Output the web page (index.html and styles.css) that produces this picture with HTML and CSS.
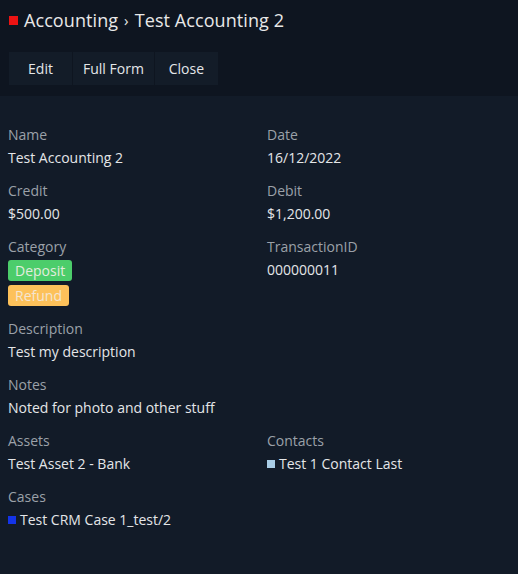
FILE: index.html
```html
<!DOCTYPE html>
<html lang="en">
<head>
  <meta charset="UTF-8" />
  <title>Accounting - Test Accounting 2</title>
  <link rel="stylesheet" href="styles.css">
</head>
<body>
  <div class="header">
    <h1 class="title">
      <span class="swatch swatch-red"></span>
      Accounting <span class="sep">›</span> Test Accounting 2
    </h1>
    <div class="toolbar">
      <button>Edit</button>
      <button>Full Form</button>
      <button>Close</button>
    </div>
  </div>

  <div class="details">
    <div class="field">
      <div class="label">Name</div>
      <div class="value">Test Accounting 2</div>
    </div>
    <div class="field">
      <div class="label">Date</div>
      <div class="value">16/12/2022</div>
    </div>

    <div class="field">
      <div class="label">Credit</div>
      <div class="value">$500.00</div>
    </div>
    <div class="field">
      <div class="label">Debit</div>
      <div class="value">$1,200.00</div>
    </div>

    <div class="field">
      <div class="label">Category</div>
      <div class="badges">
        <span class="badge badge-green">Deposit</span>
        <span class="badge badge-orange">Refund</span>
      </div>
    </div>
    <div class="field">
      <div class="label">TransactionID</div>
      <div class="value">000000011</div>
    </div>

    <div class="field wide">
      <div class="label">Description</div>
      <div class="value">Test my description</div>
    </div>

    <div class="field wide">
      <div class="label">Notes</div>
      <div class="value">Noted for photo and other stuff</div>
    </div>

    <div class="field">
      <div class="label">Assets</div>
      <div class="value">Test Asset 2 - Bank</div>
    </div>
    <div class="field">
      <div class="label">Contacts</div>
      <div class="value"><span class="swatch swatch-light"></span>Test 1 Contact Last</div>
    </div>

    <div class="field wide">
      <div class="label">Cases</div>
      <div class="value"><span class="swatch swatch-blue"></span>Test CRM Case 1_test/2</div>
    </div>
  </div>
</body>
</html>
```

FILE: styles.css
```css
body {
  font-family: 'Open Sans', sans-serif;
  background: #121b28;
  color: #e4e6e8;
  margin: 0;
  font-size: 14px;
  min-height: 574px;
}

.header {
  background: #0e1520;
  padding: 0 8px 11px;
}

.title {
  margin: 0;
  font-size: 18px;
  font-weight: normal;
  line-height: 40px;
  display: flex;
  align-items: center;
  gap: 6px;
  padding-left: 1px;
  color: #e8e8e8;
  letter-spacing: 0.08px;
}

.sep {
  font-size: 15px;
}

.swatch {
  display: inline-block;
  width: 8px;
  height: 8px;
  margin-right: 4px;
  vertical-align: 1px;
}

.swatch-red {
  width: 9px;
  height: 9px;
  background: #ec1313;
  margin-right: 0;
}

.swatch-light {
  background: #a9cde6;
}

.swatch-blue {
  background: #1434e8;
}

.toolbar {
  display: flex;
  margin-top: 12px;
  padding-left: 1px;
}

.toolbar button {
  font-family: inherit;
  font-size: 14px;
  color: #e4e6e8;
  background: #131c28;
  border: none;
  border-right: 1px solid #0e1520;
  min-width: 64px;
  height: 33px;
  padding: 0 10px;
  cursor: pointer;
}

.details {
  display: grid;
  grid-template-columns: 1fr 1fr;
  column-gap: 16px;
  padding: 29px 8px 0;
}

.field {
  margin-bottom: 13px;
}

.field.wide {
  grid-column: 1 / -1;
}

.label {
  color: #9ba1a8;
  line-height: 20px;
  margin-bottom: 3px;
}

.value {
  line-height: 20px;
}

.badges {
  display: flex;
  flex-direction: column;
  align-items: flex-start;
  gap: 4px;
}

.badge {
  display: inline-block;
  line-height: 21px;
  padding: 0 7px;
  border-radius: 3px;
  color: #e3ecdf;
}

.badge-green {
  background: #4ccd6b;
}

.badge-orange {
  background: #fdc15a;
  color: #f4e6d2;
}
```
